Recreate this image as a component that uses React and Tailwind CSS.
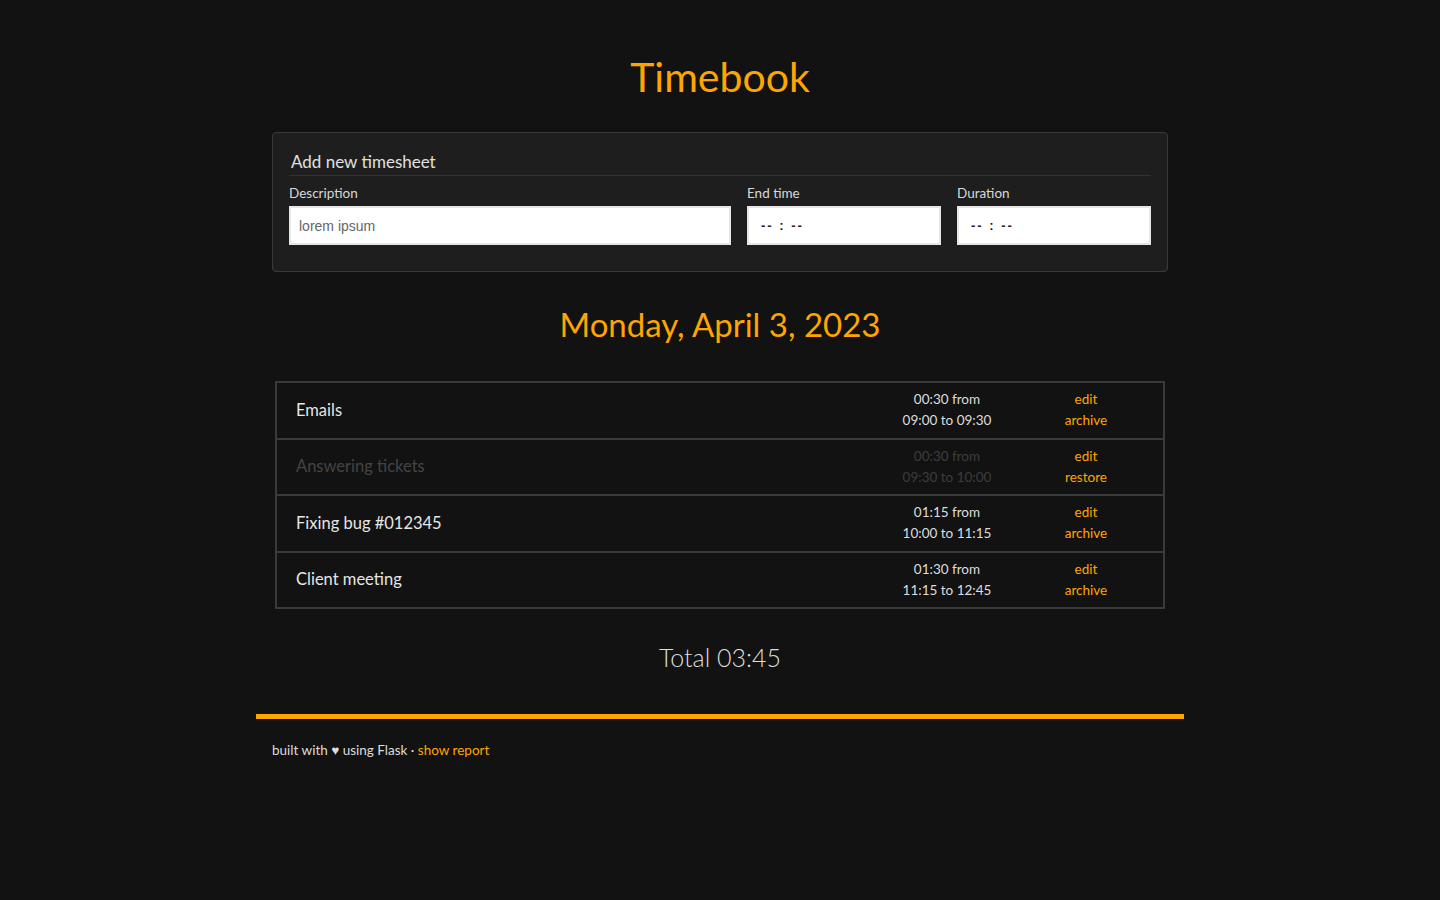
import React from "react"

const entries = [
  { desc: "Emails", dur: "00:30", from: "09:00", to: "09:30", archived: false },
  { desc: "Answering tickets", dur: "00:30", from: "09:30", to: "10:00", archived: true },
  { desc: "Fixing bug #012345", dur: "01:15", from: "10:00", to: "11:15", archived: false },
  { desc: "Client meeting", dur: "01:30", from: "11:15", to: "12:45", archived: false },
]

const TimeInput = () => (
  <div className="h-[39px] bg-white border-2 border-[#e6e6e6] flex items-center pl-[12px] pt-[1px] text-[13px] text-[#222] font-['Liberation_Sans',sans-serif] font-bold tracking-[2px]">
    -- : --
  </div>
)

export default function App() {
  return (
    <div className="min-h-[900px] bg-[#121212] font-['Lato','Noto_Sans',sans-serif] text-[#dddddd]">
      <div className="w-[928px] mx-auto pt-[49px]">
        {/* Header */}
        <h1 className="text-center text-[41px] leading-[56px] text-[#ffa500] font-normal">Timebook</h1>

        {/* New timesheet form */}
        <div className="mx-[16px] mt-[27px] bg-[#1e1e1e] border border-[#3a3a3a] rounded-[4px] px-[16px] pt-[18px] pb-[26px]">
          <div className="px-[2px] pb-[2px] text-[17px] leading-[22px] text-[#e0e0e0] border-b border-[#333333]">
            Add new timesheet
          </div>
          <div className="flex gap-[16px] mt-[9px]">
            <div className="flex-1">
              <div className="text-[13.5px] leading-[16px] mb-[5px] text-[#d8d8d8]">Description</div>
              <div className="h-[39px] bg-white border-2 border-[#e6e6e6] flex items-center pl-[8px] pt-[1px] text-[14px] text-[#666] font-['Liberation_Sans',sans-serif]">
                lorem ipsum
              </div>
            </div>
            <div className="w-[194px]">
              <div className="text-[13.5px] leading-[16px] mb-[5px] text-[#d8d8d8]">End time</div>
              <TimeInput />
            </div>
            <div className="w-[194px]">
              <div className="text-[13.5px] leading-[16px] mb-[5px] text-[#d8d8d8]">Duration</div>
              <TimeInput />
            </div>
          </div>
        </div>

        {/* Day */}
        <h2 className="text-center text-[33px] leading-[44px] text-[#ffa500] mt-[30px]">Monday, April 3, 2023</h2>

        <div className="mx-[19px] mt-[35px] border-2 border-[#3a3a3a]">
          {entries.map((e, i) => (
            <div
              key={i}
              className={`flex items-center h-[54.5px] box-content ${i > 0 ? "border-t-2 border-[#3a3a3a]" : ""}`}
            >
              <div className={`flex-1 pl-[19px] text-[16.5px] ${e.archived ? "text-[#444444]" : "text-[#e6e6e6]"}`}>
                {e.desc}
              </div>
              <div className={`w-[140px] text-center text-[13.5px] leading-[21px] ${e.archived ? "text-[#3d3d3d]" : "text-[#dddddd]"}`}>
                <div>{e.dur} from</div>
                <div>{e.from} to {e.to}</div>
              </div>
              <div className="w-[138px] mr-[8px] text-center text-[13.5px] leading-[21px] text-[#ffa500]">
                <div>edit</div>
                <div>{e.archived ? "restore" : "archive"}</div>
              </div>
            </div>
          ))}
        </div>

        <div className="text-center text-[25px] leading-[32px] font-light text-[#dddddd] mt-[32px]">Total 03:45</div>

        <div className="h-[5px] bg-[#ffa500] mt-[41px]"></div>

        <div className="px-[16px] mt-[21px] text-[13.5px] text-[#dddddd]">
          built with ♥ using Flask · <span className="text-[#ffa500]">show report</span>
        </div>
      </div>
    </div>
  )
}
